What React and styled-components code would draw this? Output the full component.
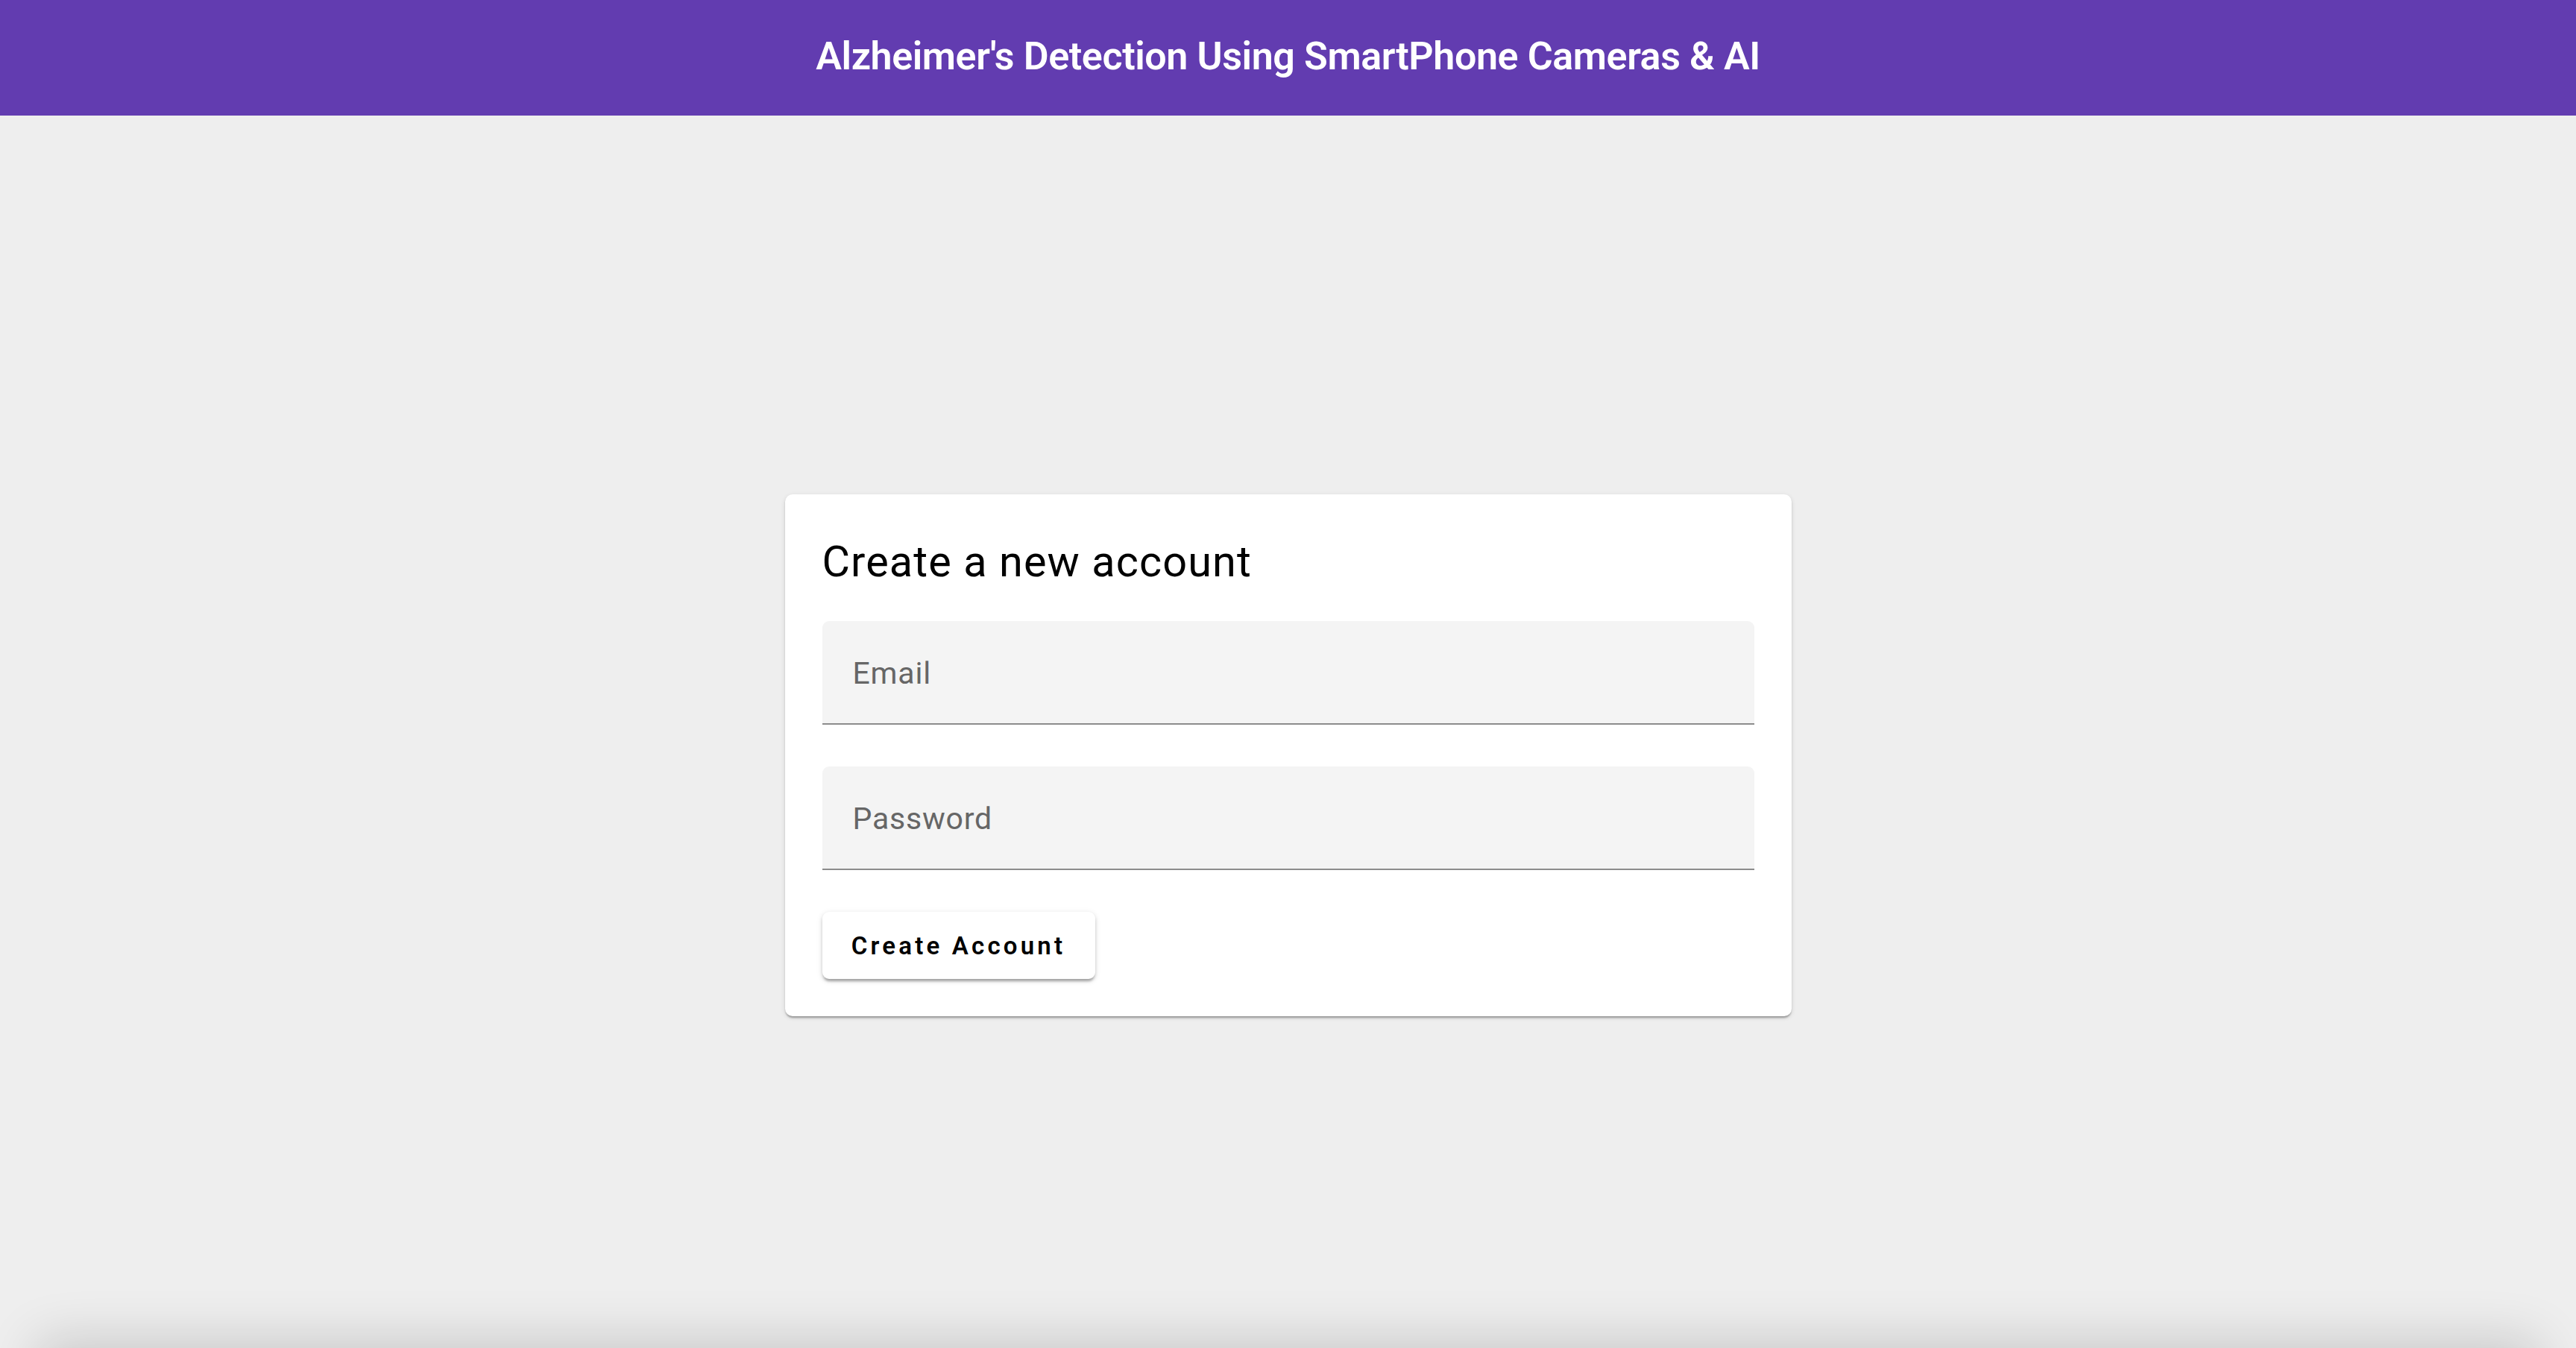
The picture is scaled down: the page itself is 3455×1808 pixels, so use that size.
import React from 'react';
import styled, { createGlobalStyle } from 'styled-components';

const GlobalStyle = createGlobalStyle`
  html, body {
    margin: 0;
    padding: 0;
    background: #eeeeee;
    font-family: Roboto, "Liberation Sans", sans-serif;
    overflow: hidden;
  }
  * { box-sizing: border-box; }
`;

// Purple app bar across the top
const AppBar = styled.header`
  height: 155px;
  background: #623cb0;
  display: flex;
  align-items: center;
  justify-content: center;
  padding-bottom: 2px;
`;

const AppTitle = styled.h1`
  margin: 0;
  color: #fff;
  font-size: 52px;
  font-weight: 600;
  letter-spacing: -0.4px;
  line-height: 1.2;
`;

// Main area keeps the card in the upper middle of the page
const Main = styled.main`
  height: 1653px;
  display: flex;
  justify-content: center;
  padding-top: 508px;
`;

const Card = styled.form`
  width: 1350px;
  align-self: flex-start;
  background: #fff;
  border-radius: 10px;
  padding: 56px 50px 50px;
  box-shadow: 0 4px 3px -2px rgba(0, 0, 0, 0.2), 0 2px 2px 0 rgba(0, 0, 0, 0.14),
    0 2px 6px 0 rgba(0, 0, 0, 0.12);
  display: flex;
  flex-direction: column;
`;

const CardTitle = styled.h2`
  margin: 0 0 45px;
  font-size: 57.6px;
  font-weight: 400;
  letter-spacing: 1.1px;
  line-height: 1.2;
  color: #000;
`;

const Field = styled.label`
  height: 139px;
  background: #f4f4f4;
  border-radius: 9px 9px 0 0;
  border-bottom: 2px solid #8c8c8c;
  display: flex;
  align-items: center;
  padding: 0 41px;
  margin-bottom: 56px;
`;

const Input = styled.input`
  width: 100%;
  border: none;
  outline: none;
  background: transparent;
  font-family: Roboto, "Liberation Sans", sans-serif;
  font-size: 41px;
  color: #222;
  letter-spacing: 0.8px;
  padding: 0;
  margin-top: 2px;

  &::placeholder {
    color: #666;
  }
`;

const Button = styled.button`
  align-self: flex-start;
  width: 366px;
  height: 90px;
  padding: 0;
  background: #fff;
  border: none;
  border-radius: 9px;
  font-family: Roboto, "Liberation Sans", sans-serif;
  font-size: 33px;
  font-weight: 600;
  letter-spacing: 4.2px;
  color: #000;
  cursor: pointer;
  box-shadow: 0 5px 3px -2px rgba(0, 0, 0, 0.2), 0 3px 4px 0 rgba(0, 0, 0, 0.14),
    0 2px 8px 0 rgba(0, 0, 0, 0.12);
`;

// Bar just below the fold; only its shadow shows at the bottom edge
const Footer = styled.footer`
  height: 120px;
  margin: 0 60px;
  background: #eeeeee;
  box-shadow: 0 0 70px 10px rgba(0, 0, 0, 0.16);
`;

export default function App() {
  return (
    <>
      <GlobalStyle />
      <AppBar>
        <AppTitle>Alzheimer's Detection Using SmartPhone Cameras &amp; AI</AppTitle>
      </AppBar>
      <Main>
        <Card onSubmit={e => e.preventDefault()}>
          <CardTitle>Create a new account</CardTitle>
          <Field>
            <Input type="email" placeholder="Email" />
          </Field>
          <Field>
            <Input type="password" placeholder="Password" />
          </Field>
          <Button type="submit">Create Account</Button>
        </Card>
      </Main>
      <Footer />
    </>
  );
}
